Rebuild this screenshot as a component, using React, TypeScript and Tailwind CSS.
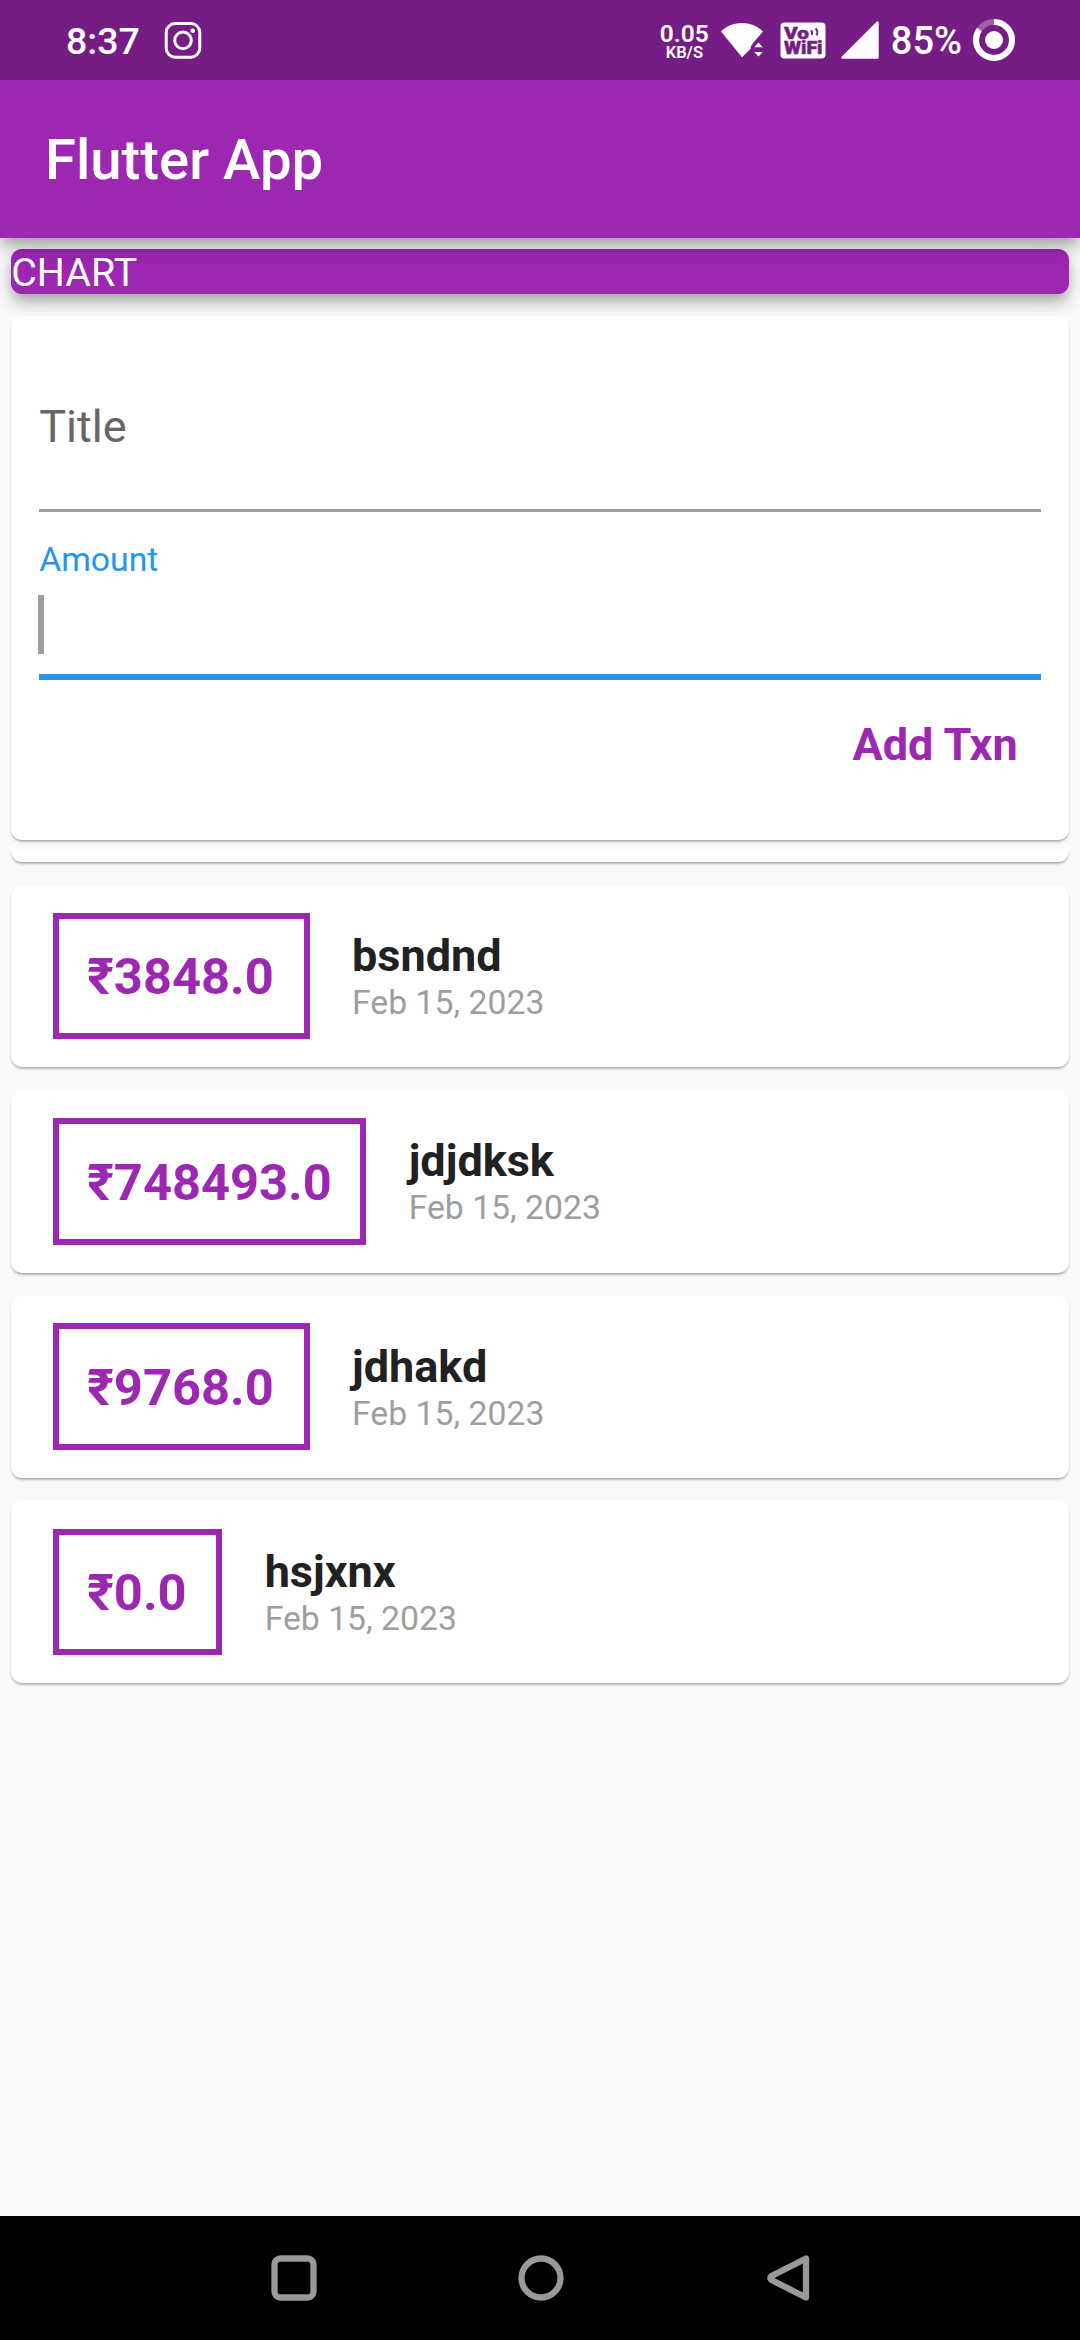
import React from "react";

type Transaction = { amount: string; title: string; date: string; box: string };

const transactions: Transaction[] = [
  { amount: "₹3848.0", title: "bsndnd", date: "Feb 15, 2023", box: "w-[256.4px]" },
  { amount: "₹748493.0", title: "jdjdksk", date: "Feb 15, 2023", box: "w-[313px]" },
  { amount: "₹9768.0", title: "jdhakd", date: "Feb 15, 2023", box: "w-[256.4px]" },
  { amount: "₹0.0", title: "hsjxnx", date: "Feb 15, 2023", box: "w-[169px]" },
];

const cardShadow =
  "shadow-[0_3px_3px_-1px_rgba(0,0,0,0.24),0_1px_2px_0_rgba(0,0,0,0.14)]";

function InstagramIcon() {
  return (
    <svg className="ml-[26px] h-[38px] w-[38px]" viewBox="0 0 38 38" fill="none" stroke="white">
      <rect x="2.2" y="2.6" width="33.6" height="33.6" rx="9" strokeWidth="3" />
      <circle cx="19" cy="19.4" r="8.3" strokeWidth="3" />
      <circle cx="28.7" cy="9.8" r="2.3" fill="white" stroke="none" />
    </svg>
  );
}

function WifiIcon() {
  return (
    <svg className="ml-[11px] h-[36px] w-[44px]" viewBox="0 0 44 36" fill="white">
      <path d="M1 9.5C12.5-1.700 31.5-1.700 43 9.5L33.5 20.5L30.8 24.5L30.8 26.5L22 35.2Z" />
      <path d="M34.2 25.2L38.5 20.5L42.8 25.2ZM34.2 30L42.8 30L38.5 34.5Z" />
    </svg>
  );
}

function VoWifiIcon() {
  return (
    <svg className="ml-4 h-[37px] w-[46px]" viewBox="0 0 46 37">
      <rect x="0.5" y="0.5" width="45" height="36" rx="4" fill="white" />
      <g
        fill="#751d84"
        stroke="#751d84"
        strokeWidth="0.5"
        fontFamily="Roboto, sans-serif"
        fontWeight="900"
      >
        <text x="4" y="17" fontSize="17" textLength="25" lengthAdjust="spacingAndGlyphs">Vo</text>
        <text x="4" y="32.3" fontSize="17.5" textLength="38.5" lengthAdjust="spacingAndGlyphs">WiFi</text>
      </g>
      <path d="M31 8.2C32.5 9.5 32.5 11 31.8 13M35.5 6.500C37.8 8.5 37.8 11 36.5 13.5" fill="none" stroke="#751d84" strokeWidth="1.9" />
    </svg>
  );
}

function SignalIcon() {
  return (
    <svg className="ml-[15px] h-[38px] w-[38px]" viewBox="0 0 38 38">
      <path d="M1.5 36.5L36.5 1.5V36.5Z" fill="white" stroke="white" strokeWidth="2.4" strokeLinejoin="round" />
    </svg>
  );
}

function BatteryIcon() {
  return (
    <svg className="ml-[11px] h-[42px] w-[42px]" viewBox="0 0 42 42" fill="none">
      <circle cx="21" cy="21" r="18" stroke="white" strokeOpacity="0.3" strokeWidth="6" />
      <circle cx="21" cy="21" r="18" stroke="white" strokeWidth="6" pathLength="100" strokeDasharray="85 15" transform="rotate(-90 21 21)" />
      <circle cx="21" cy="21" r="9" fill="white" />
    </svg>
  );
}

function StatusBar() {
  return (
    <div className="flex h-[80px] shrink-0 items-center bg-[#751d84] pr-[65px] pl-[66px] text-white">
      <span className="w-[72px] pt-0.5 text-[37.5px] leading-[44px] font-medium whitespace-nowrap">8:37</span>
      <InstagramIcon />
      <div className="ml-auto flex flex-col items-center pt-0.5 font-semibold">
        <span className="text-[24.5px] leading-[22px]">0.05</span>
        <span className="text-[16.5px] leading-[15px]">KB/S</span>
      </div>
      <WifiIcon />
      <VoWifiIcon />
      <SignalIcon />
      <span className="ml-[12px] pt-0.5 text-[38px] leading-[44px] font-medium">85%</span>
      <BatteryIcon />
    </div>
  );
}

function TransactionCard({ amount, title, date, box }: Transaction) {
  return (
    <div className={`mx-[11.25px] mb-[22.5px] flex h-[182.8px] shrink-0 items-center rounded-[11px] bg-white pl-[42.2px] ${cardShadow}`}>
      <div className={`flex h-[126.6px] items-center border-[6px] border-[#9c27b0] pt-0.5 pl-[27.8px] ${box}`}>
        <span className="text-[50.625px] leading-[59px] font-bold whitespace-nowrap text-[#9c27b0]">{amount}</span>
      </div>
      <div className="ml-[42.2px] flex flex-col">
        <span className="text-[45px] leading-[53px] font-bold text-[#212121]">{title}</span>
        <span className="pt-px text-[33.75px] leading-[40px] text-[#9e9e9e]">{date}</span>
      </div>
    </div>
  );
}

export default function App() {
  return (
    <div className="flex h-[2340px] w-[1080px] flex-col overflow-hidden bg-[#fafafa] font-['Roboto',sans-serif]">
      <div className="relative z-10 shrink-0 shadow-[0_5.6px_11px_-3px_rgba(0,0,0,0.2),0_11px_14px_0_rgba(0,0,0,0.14),0_3px_28px_0_rgba(0,0,0,0.12)]">
        <StatusBar />
        <header className="flex h-[157.5px] items-center bg-[#9c27b0] pt-[3px] pl-[45px]">
          <h1 className="text-[56.25px] leading-[66px] font-medium text-white">Flutter App</h1>
        </header>
      </div>

      <div className="mx-[11.25px] mt-[11.25px] h-[45px] shrink-0 rounded-[11px] bg-[#9c27b0] text-[39.375px] leading-[47px] text-white shadow-[0_5.6px_11px_-3px_rgba(0,0,0,0.2),0_11px_14px_0_rgba(0,0,0,0.14),0_3px_28px_0_rgba(0,0,0,0.12)]">
        CHART
      </div>

      <section className={`mx-[11.25px] mt-[22.5px] flex h-[523.75px] shrink-0 flex-col rounded-[11px] bg-white px-[28px] pt-[85px] ${cardShadow}`}>
        <label className="h-[108px] text-[45px] leading-[52px] text-[#666666]">Title</label>
        <div className="h-[3px] bg-[#9e9e9e]" />
        <label className="mt-[27.5px] text-[33.75px] leading-[40px] text-[#2196f3]">Amount</label>
        <div className="mt-[15px] -ml-px h-[59px] w-[6px] bg-[#9e9e9e]" />
        <div className="mt-5 h-[6px] bg-[#2196f3]" />
        <button className="mt-[38px] mr-[23px] self-end text-[45px] leading-[53px] font-bold text-[#9c27b0]">Add Txn</button>
      </section>

      <main className="mt-[11.25px] flex min-h-0 flex-1 flex-col overflow-hidden">
        <div className={`mx-[11.25px] -mt-[172px] mb-[22.5px] h-[182.8px] shrink-0 rounded-[11px] bg-white ${cardShadow}`} />
        {transactions.map((t) => (
          <TransactionCard key={t.title} {...t} />
        ))}
      </main>

      <nav className="flex h-[124px] shrink-0 items-center justify-center gap-[199px] bg-black pl-0.5">
        <svg className="h-[48px] w-[48px]" viewBox="0 0 48 48" fill="none" stroke="#999999" strokeWidth="6.3">
          <rect x="4.5" y="4.5" width="39" height="39" rx="6" />
        </svg>
        <svg className="h-[48px] w-[48px]" viewBox="0 0 48 48" fill="none" stroke="#999999" strokeWidth="6.3">
          <circle cx="24" cy="24" r="19.5" />
        </svg>
        <svg className="h-[48px] w-[48px]" viewBox="0 0 48 48" fill="none" stroke="#999999" strokeWidth="6.3" strokeLinejoin="round">
          <path d="M42 4.5V43.5L7.500 26Q5.5 24 7.5 22Z" />
        </svg>
      </nav>
    </div>
  );
}
